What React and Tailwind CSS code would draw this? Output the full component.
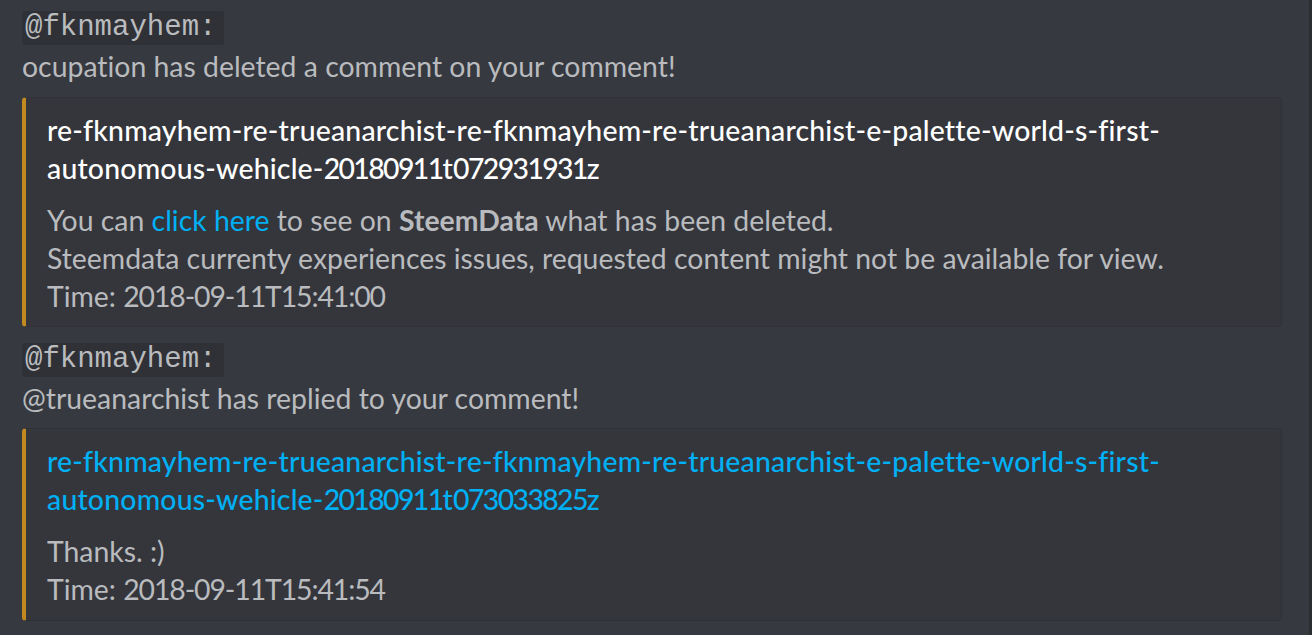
import React from "react";

const sans = { fontFamily: '"Lato", "Noto Sans", sans-serif' };

function Code({ children }) {
  return (
    <div className="flex h-[38px] items-center">
      <span
        className="inline-block h-[34px] rounded-[3px] bg-[#2f3136] px-[3px] pr-[8px] text-[29px] leading-[34px] text-[#b9bbbe]"
        style={{ fontFamily: '"Liberation Mono", "DejaVu Sans Mono", monospace' }}
      >
        {children}
      </span>
    </div>
  );
}

function N({ children }) {
  return <span className="tracking-[-1.1px]">{children}</span>;
}

function TN({ children }) {
  return <span className="tracking-[-1.6px]">{children}</span>;
}

function Embed({ className = "", children }) {
  return (
    <div
      className={
        "rounded-[4px] border border-[#303238] border-l-4 border-l-[#c08a1e] bg-[#34363c] pl-[21px] pr-4 pt-[13px] " +
        className
      }
    >
      {children}
    </div>
  );
}

export default function App() {
  return (
    <div className="flex h-[635px] w-[1312px] overflow-hidden bg-[#36393f] [font-variant-ligatures:none]" style={sans}>
      <div className="flex-1 pl-[22px] pr-[27px] pt-[9px] text-[28.4px] leading-[38px] text-[#b9bbbe]">
        <Code>@fknmayhem:</Code>
        <div>ocupation has deleted a comment on your comment!</div>
        <Embed className="mt-[12px] pb-[11px]">
          <div className="font-medium tracking-[0.2px] text-white">
            <div>re-fknmayhem-re-trueanarchist-re-fknmayhem-re-trueanarchist-e-palette-world-s-first-</div>
            <div>
              autonomous-wehicle-<TN>20180911</TN>t<TN>072931931</TN>z
            </div>
          </div>
          <div className="mt-[14px]">
            <div>
              You can <span className="text-[#00b0f4]">click here</span> to see on{" "}
              <span className="font-bold">SteemData</span> what has been deleted.
            </div>
            <div>Steemdata currenty experiences issues, requested content might not be available for view.</div>
            <div>
              Time: <N>2018-09-11T15:41:00</N>
            </div>
          </div>
        </Embed>
        <div className="mt-[14px]">
          <Code>@fknmayhem:</Code>
        </div>
        <div>@trueanarchist has replied to your comment!</div>
        <Embed className="mt-[11px] pb-[12px]">
          <div className="font-medium tracking-[0.2px] text-[#00b0f4]">
            <div>re-fknmayhem-re-trueanarchist-re-fknmayhem-re-trueanarchist-e-palette-world-s-first-</div>
            <div>
              autonomous-wehicle-<TN>20180911</TN>t<TN>073033825</TN>z
            </div>
          </div>
          <div className="mt-[14px]">
            <div>Thanks. :)</div>
            <div>
              Time: <N>2018-09-11T15:41:54</N>
            </div>
          </div>
        </Embed>
      </div>
      <div className="w-[3px] bg-[#2b2d31]" />
    </div>
  );
}
